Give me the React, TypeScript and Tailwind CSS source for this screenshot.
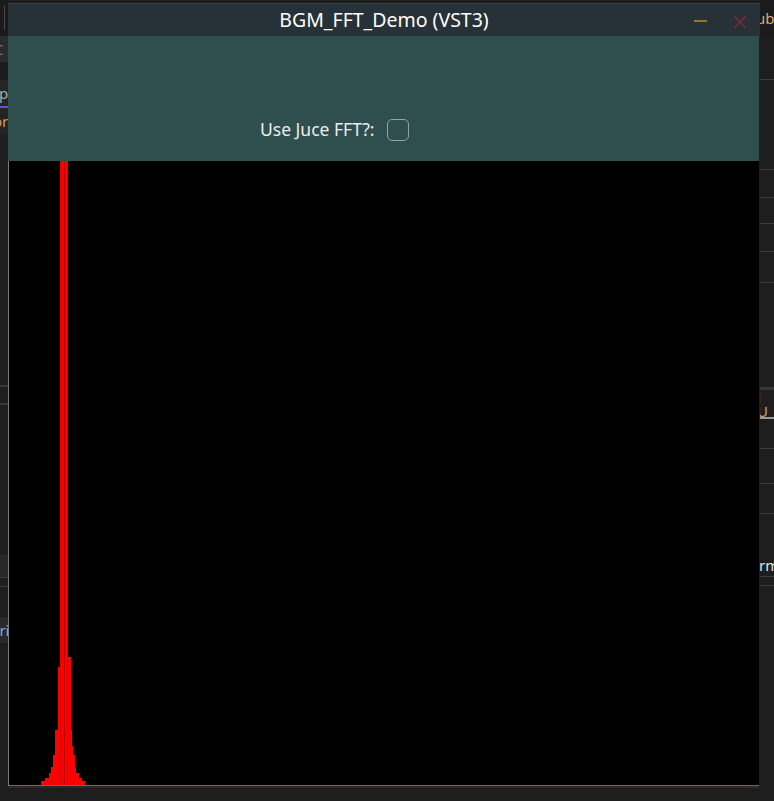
import React from "react";

// spectrum outline: [y, leftX, rightX] steps, coords relative to the black plot area (top = 0)
const STEPS: [number, number, number][] = [
  [0, 52, 59],
  [277, 51, 59],
  [496, 51, 62],
  [506, 49, 62],
  [569, 46, 63],
  [585, 46, 64],
  [594, 44, 66],
  [606, 42, 67],
  [612, 40, 70],
  [617, 36, 73],
  [620, 32, 76],
];

function Spectrum() {
  const h = 625;
  const left: string[] = [];
  const right: string[] = [];
  STEPS.forEach(([y, l, r], i) => {
    const next = i < STEPS.length - 1 ? STEPS[i + 1][0] : h;
    left.push(`${l},${y}`, `${l},${next}`);
    right.push(`${r},${y}`, `${r},${next}`);
  });
  const poly = [...left, ...right.reverse()].join(" ");
  return (
    <svg width="750" height={h} className="block" shapeRendering="crispEdges">
      <polygon points={poly} fill="#ff0000" />
      <rect x="55" y="0" width="1" height={h} fill="#b80000" />
      <rect x="51" y="0" width="1" height={h} fill="#e00000" />
      <rect x="58" y="0" width="1" height={h} fill="#e00000" />
      <rect x="0" y={h - 1} width="750" height="1" fill="#c8404f" />
    </svg>
  );
}

function LeftStrip() {
  return (
    <div className="w-[8px] flex flex-col text-[15px] leading-none overflow-hidden" style={{ fontFamily: "'Noto Sans', sans-serif" }}>
      <div className="h-[36px] bg-[#1b1b1b] flex pt-[5px] pl-[4px]">
        <div className="w-[1px] h-[25px] bg-[#4a4a4a]" />
      </div>
      <div className="h-[26px] bg-[#2b2b2b] text-[#777] flex items-center -ml-[6px]">C</div>
      <div className="h-[18px] bg-[#1b1b1b]" />
      <div className="h-[26px] bg-[#262626] text-[#aaa] flex items-center -ml-[1px]">p</div>
      <div className="h-[2px] bg-[#6a50c8]" />
      <div className="h-[27px] bg-[#242424] text-[#c89a6a] flex items-center -ml-[7px]">or</div>
      <div className="h-[250px] bg-[#1e1e1e]" />
      <div className="h-[2px] bg-[#3a3a3a]" />
      <div className="h-[16px] bg-[#1e1e1e]" />
      <div className="h-[2px] bg-[#3a3a3a]" />
      <div className="h-[150px] bg-[#1e1e1e]" />
      <div className="h-[22px] bg-[#282828]" />
      <div className="h-[1px] bg-[#3a3a3a]" />
      <div className="h-[8px] bg-[#1e1e1e]" />
      <div className="h-[1px] bg-[#3a3a3a]" />
      <div className="h-[30px] bg-[#1e1e1e]" />
      <div className="h-[26px] bg-[#2a2a2a] text-[#8aa8c8] flex items-center -ml-[6px]">tri</div>
      <div className="flex-1 bg-[#1e1e1e]" />
    </div>
  );
}

function RightStrip() {
  const line = <div className="h-[1px] bg-[#3c3c3c]" />;
  return (
    <div className="w-[14px] flex flex-col text-[15px] leading-none overflow-hidden" style={{ fontFamily: "'Noto Sans', sans-serif" }}>
      <div className="h-[36px] bg-[#1b1b1b] text-[#d8a878] flex items-center -ml-[4px]">ub</div>
      <div className="h-[43px] bg-[#1e1e1e]" />
      {line}
      <div className="h-[89px] bg-[#1e1e1e]" />
      {line}
      <div className="h-[27px] bg-[#1e1e1e]" />
      {line}
      <div className="h-[25px] bg-[#1e1e1e]" />
      {line}
      <div className="h-[27px] bg-[#1e1e1e]" />
      {line}
      <div className="h-[30px] bg-[#1e1e1e]" />
      {line}
      <div className="h-[104px] bg-[#1e1e1e]" />
      <div className="h-[3px] bg-[#383838]" />
      <div className="h-[27px] bg-[#1e1e1e] text-[#d0a070] flex items-center -ml-[3px]">J U</div>
      <div className="h-[2px] bg-[#9a9a9a]" />
      <div className="h-[29px] bg-[#1e1e1e]" />
      {line}
      <div className="h-[34px] bg-[#1e1e1e]" />
      {line}
      <div className="h-[29px] bg-[#1e1e1e]" />
      {line}
      <div className="h-[40px] bg-[#1e1e1e]" />
      <div className="h-[22px] bg-[#1e1e1e] text-[#d8e4f0] flex items-center -ml-[1px]">rm</div>
      {line}
      <div className="h-[8px] bg-[#1e1e1e]" />
      {line}
      <div className="flex-1 bg-[#1e1e1e]" />
    </div>
  );
}

export default function App() {
  return (
    <div className="relative w-[774px] h-[801px] bg-[#1e1e1e] overflow-hidden flex justify-between">
      <LeftStrip />
      <RightStrip />

      {/* plugin window */}
      <div
        className="absolute left-[8px] top-[3px] w-[752px] flex flex-col"
        style={{ fontFamily: "'Noto Sans', 'Open Sans', sans-serif" }}
      >
        <div className="h-[33px] bg-[#263238] border-t border-[#37424b] relative flex items-center justify-center">
          <span className="text-[19.5px] text-white">BGM_FFT_Demo (VST3)</span>
          <div className="absolute left-[686px] top-[16px] w-[13px] h-[2px] bg-[#8a7a2e]" />
          <svg className="absolute left-[725px] top-[11px]" width="14" height="14" viewBox="0 0 14 14">
            <path d="M1 1L13 13M13 1L1 13" stroke="#7c2833" strokeWidth="1.6" />
          </svg>
        </div>

        <div className="h-[125px] bg-[#2f4f4f] mr-[1px] flex items-center pl-[252px] pt-[62px]">
          <span className="text-[17.5px] text-[#ececec]">Use Juce FFT?:</span>
          <div className="ml-[12px] w-[22px] h-[22px] rounded-[5px] border-[1.5px] border-[#8fa3a3]" />
        </div>

        <div className="bg-black mr-[1px] border-l border-[#7a7a7a] overflow-hidden">
          <Spectrum />
        </div>
        <div className="h-[2px] bg-[#2a2a2a] mr-[1px]" />
      </div>
    </div>
  );
}
